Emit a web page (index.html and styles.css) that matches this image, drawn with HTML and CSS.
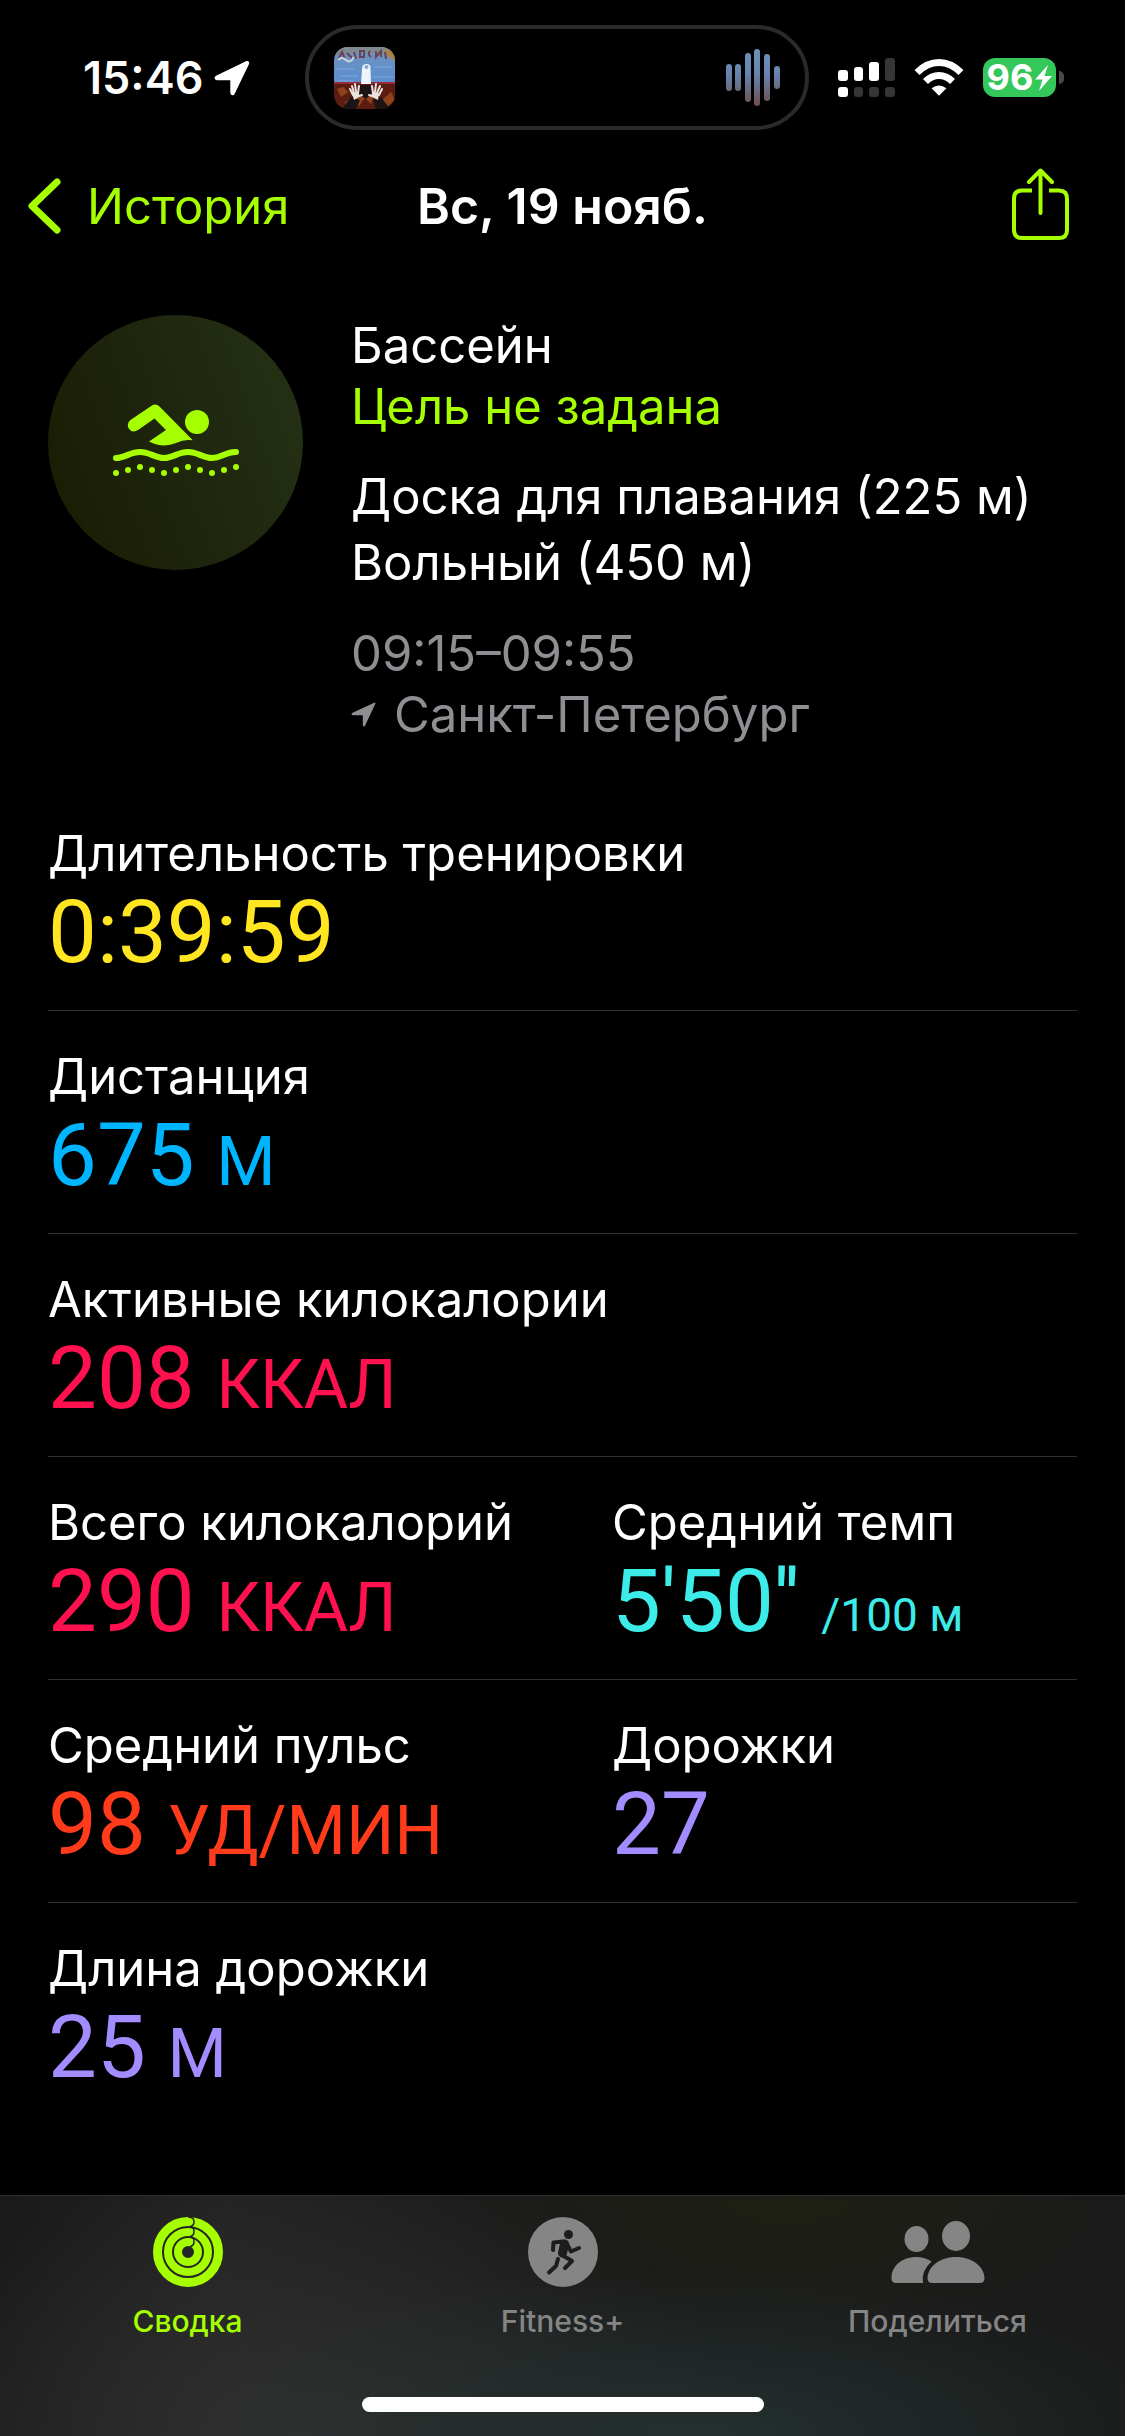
FILE: index.html
```html
<!DOCTYPE html>
<html lang="ru">
<head>
<meta charset="utf-8">
<meta name="viewport" content="width=device-width, initial-scale=1">
<title>Вс, 19 нояб.</title>
<link rel="stylesheet" href="styles.css">
</head>
<body>
<div class="status">
  <div class="status-left">
    <span class="time">15:46</span>
    <svg class="arrow" viewBox="0 0 36 36" fill="#fff"><path d="M2.500 15.500 31.500 1.400C34.200.200 36 2 34.800 4.500L20.700 33.800C19.400 36.300 16.300 35.600 16.300 32.600V20.200H3.300C.2 20.200-.5 16.900 2.500 15.500Z"/></svg>
  </div>
  <div class="island">
    <svg class="cover" viewBox="0 0 61 62">
      <defs>
        <clipPath id="cover"><rect width="61" height="62" rx="14"/></clipPath>
        <linearGradient id="sky" x2="0" y2="1"><stop offset="0" stop-color="#6f94bd"/><stop offset="1" stop-color="#5b8dcf"/></linearGradient>
      </defs>
      <g clip-path="url(#cover)">
        <rect width="61" height="38" fill="url(#sky)"/>
        <path d="M0 0H61V9L52 8 40 6 30 5 18 6 0 9Z" fill="#7d8a90"/>
        <path d="M4 13 8 5 11 12M13 6l5 5M20 5l2 7M26 4v6h4V4ZM36 4q-3 3 1 6M42 4v6l5-6v6M51 5l1 7" fill="none" stroke="#6d4155" stroke-width="2"/>
        <path d="M50 2 61 4V14L55 10Z" fill="#a9833f"/>
        <path d="M4 13q4-4 8 0t8-3" fill="none" stroke="#c9d3da" stroke-width="2"/>
        <path d="M2 22H20M6 29H24M40 20H58M38 30H60M3 34H20" stroke="#78a9e2"/>
        <rect y="36" width="61" height="26" fill="#5c1c12"/>
        <path d="M0 36H61" stroke="#952b38" stroke-width="2"/>
        <path d="M3 42l6-2 5 5-7 5ZM18 53l8-8 5 6-6 8ZM34 42l6 6-3 9-6-6ZM48 53l9-8 4 8-7 6ZM10 56l5-3 4 5Z" fill="#8e431c"/>
        <path d="M26 38H36L38 46 32 52 25 47ZM8 62 17 50 26 53 22 62ZM39 53 47 50 56 62H42Z" fill="#1b1414"/>
        <path d="M28 22q0-5 4.500-5t4 5L37 37H27Z" fill="#f0f3f7"/><circle cx="32.500" cy="20" r="2" fill="#7fa6d8"/>
        <g fill="none" stroke="#e9e4df" stroke-width="2" stroke-linecap="round"><path d="M19 48 16 42M20 46 18 39M22 45 21 37M24 46 25 39M25 49 28 48M45 48 48 42M43 46 46 39M41 45 42 37M39 46 38 39M38 49 35 48"/></g>
        <path d="M18 46 25 45 25 50 20 53ZM45 46 38 45 38 50 44 53Z" fill="#e9e4df"/>
      </g>
    </svg>
    <svg class="wave" viewBox="0 0 54 57">
      <defs><linearGradient id="wv" gradientUnits="userSpaceOnUse" x1="0" y1="0" x2="0" y2="57"><stop offset="0" stop-color="#6f92b8"/><stop offset=".45" stop-color="#6583ae"/><stop offset="1" stop-color="#714d4a"/></linearGradient></defs>
      <g fill="url(#wv)"><rect y="15" width="6" height="27" rx="3"/><rect x="9" y="15" width="6" height="27" rx="3"/><rect x="19" y="4" width="6" height="49" rx="3"/><rect x="28" y="0" width="6" height="57" rx="3"/><rect x="38" y="5" width="6" height="47" rx="3"/><rect x="48" y="17" width="6" height="23" rx="3"/></g>
    </svg>
  </div>
  <div class="status-right">
    <svg class="signal" viewBox="0 0 57 39"><g fill="#fff"><rect y="12" width="10" height="11" rx="3"/><rect x="16" y="9" width="9" height="14" rx="3"/><rect x="31" y="4" width="10" height="19" rx="3"/><rect y="29" width="10" height="10" rx="3"/></g><g fill="#363636"><rect x="47" width="10" height="23" rx="3"/><rect x="16" y="29" width="9" height="10" rx="3"/><rect x="31" y="29" width="10" height="10" rx="3"/><rect x="47" y="29" width="10" height="10" rx="3"/></g></svg>
    <svg class="wifi" viewBox="0 0 50 37"><g fill="none" stroke="#fff" stroke-width="7"><path d="M3 13.500Q13 3.500 25 3.500T47 13.500"/><path d="M11.500 22.500Q17.500 16.500 25 16.500T38.500 22.500"/></g><path d="M17.600 29.300Q25 23.500 32.400 29.300L25 36.800Z" fill="#fff"/></svg>
    <div class="battery">
      <span>96</span>
      <svg viewBox="0 0 17 26" fill="#fff"><path d="M13 0 0 14.500H7.500L4 26 17 11H9.500Z"/></svg>
      <i class="battery-tip"></i>
    </div>
  </div>
</div>

<header class="nav">
  <button class="back" type="button">
    <svg viewBox="0 0 33 56" fill="none" stroke="currentColor" stroke-width="7" stroke-linecap="round" stroke-linejoin="round"><path d="M29 4 4 28 29 52"/></svg>
    <span>История</span>
  </button>
  <h1>Вс, 19 нояб.</h1>
  <button class="share" type="button" aria-label="Поделиться тренировкой">
    <svg viewBox="0 0 57 72" fill="none" stroke="currentColor" stroke-width="4" stroke-linecap="round" stroke-linejoin="round"><path d="M28.500 45V3M17 14 28.500 2.500 40 14"/><path stroke-linecap="butt" d="M20 22.500H10Q2 22.500 2 30.500V62Q2 70 10 70H47Q55 70 55 62V30.500Q55 22.500 47 22.500H37"/></svg>
  </button>
</header>

<main>
  <section class="hero">
    <div class="badge">
      <svg viewBox="0 0 126 72" fill="currentColor"><path d="M17.800 15.800 39 1.500Q43-.8 46.500 2.500L79.800 36.300Q71 35 63 39Q50 44.500 36 37.500L53 26 41.500 14.500 25 26Q19 29.500 15.700 24.500 13.200 19 17.800 15.800Z"/><circle cx="84" cy="18" r="12"/><path fill="none" stroke="currentColor" stroke-width="6" stroke-linecap="round" d="M3 54C12 54 17 48 27 48S42 54 51 54 65 48 75 48 90 54 99 54 112 48 123 48"/><circle cx="3" cy="69" r="3"/><circle cx="15" cy="66" r="3"/><circle cx="27" cy="63" r="3"/><circle cx="39" cy="66" r="3"/><circle cx="51" cy="69" r="3"/><circle cx="63" cy="66" r="3"/><circle cx="75" cy="63" r="3"/><circle cx="87" cy="66" r="3"/><circle cx="99" cy="69" r="3"/><circle cx="111" cy="66" r="3"/><circle cx="123" cy="63" r="3"/></svg>
    </div>
    <div class="info">
      <div>
        <h2>Бассейн</h2>
        <p class="goal">Цель не задана</p>
      </div>
      <div class="strokes">
        <p>Доска для плавания (225 м)</p>
        <p>Вольный (450 м)</p>
      </div>
      <div class="meta">
        <p>09:15–09:55</p>
        <p class="place"><svg viewBox="0 0 36 36" fill="currentColor"><path d="M1.500 16 33.500 1Q36 0 35 2.500L20 34.500Q18 36.500 17 33.500V19H2.500Q-.5 18 1.500 16Z"/></svg>Санкт-Петербург</p>
      </div>
    </div>
  </section>

  <dl class="metrics">
    <div class="row"><div><dt>Длительность тренировки</dt><dd class="yellow">0:39:59</dd></div></div>
    <div class="row"><div><dt>Дистанция</dt><dd class="blue">675 <span class="unit">М</span></dd></div></div>
    <div class="row"><div><dt>Активные килокалории</dt><dd class="pink">208 <span class="unit">ККАЛ</span></dd></div></div>
    <div class="row">
      <div><dt>Всего килокалорий</dt><dd class="pink">290 <span class="unit">ККАЛ</span></dd></div>
      <div><dt>Средний темп</dt><dd class="cyan">5'50'' <span class="per">/100 м</span></dd></div>
    </div>
    <div class="row">
      <div><dt>Средний пульс</dt><dd class="red">98 <span class="unit">УД/МИН</span></dd></div>
      <div><dt>Дорожки</dt><dd class="violet">27</dd></div>
    </div>
    <div class="row"><div><dt>Длина дорожки</dt><dd class="violet">25 <span class="unit">М</span></dd></div></div>
  </dl>
</main>

<footer class="tabbar">
  <nav class="tabs">
    <a class="tab active" href="#summary" aria-current="page">
      <svg class="tab-icon" viewBox="0 0 70 70" fill="none"><g stroke="currentColor"><circle cx="35" cy="35" r="30.500" stroke-width="9"/><circle cx="35" cy="35" r="20" stroke-width="8"/><circle cx="35" cy="35" r="10" stroke-width="8"/></g><path d="M35 0Q41 0 41 4.500T37 9.500Q41 10 41 14.500T37 19.500Q41 20 41 24.500T37 29.500" stroke="#232323" stroke-width="1.500"/></svg>
      <span>Сводка</span>
    </a>
    <a class="tab" href="#fitness">
      <svg class="tab-icon" viewBox="0 0 70 70"><circle cx="35" cy="35" r="35" fill="currentColor"/><g fill="none" stroke="#1d1d1d" stroke-linecap="round" stroke-linejoin="round"><path d="M36.500 27 34.500 36" stroke-width="9"/><path d="M35 24.500 25.500 25.500 25 33M39 27 43 34.500 51 31M34 38 44 44 37 51" stroke-width="4"/><path d="M30 42 28 49 21 55.500" stroke-width="4"/></g><circle cx="40.500" cy="17.500" r="4.500" fill="#1d1d1d"/></svg>
      <span>Fitness+</span>
    </a>
    <a class="tab" href="#sharing">
      <svg class="tab-icon wide" viewBox="0 0 94 70" fill="currentColor"><ellipse cx="25.500" cy="22" rx="12" ry="13"/><ellipse cx="65" cy="19" rx="14" ry="15"/><path d="M5 66Q0 66 .5 60C1 49 11 40 25 40Q34 40 40.500 44.500Q30 54 32 66Z"/><path d="M41 66Q36.500 66 36.500 61C37 50 48 40 65 40S93 50 93.500 61Q93.500 66 89 66Z"/></svg>
      <span>Поделиться</span>
    </a>
  </nav>
  <div class="home"></div>
</footer>
</body>
</html>
```
FILE: styles.css
```css
* { box-sizing: border-box; margin: 0; padding: 0; }

:root { --lime: #a6ff00; --gray: #8e8e93; }

body {
  display: flex;
  flex-direction: column;
  min-height: 100vh;
  background: #000;
  color: #fff;
  font-family: Inter, "Noto Sans", sans-serif;
  font-size: 49px;
  line-height: 61px;
  white-space: nowrap;
}

svg { display: block; flex: none; }
h1, h2 { font-size: inherit; font-weight: 400; }
button { border: 0; background: none; font: inherit; color: var(--lime); }

/* Status bar */
.status {
  display: grid;
  grid-template-columns: 305fr 504fr 316fr;
  height: 155px;
  padding: 25px 0;
}
.status-left, .status-right { display: flex; align-items: center; }
.status-left { gap: 11px; padding-left: 83px; }
.time { font-size: 45px; font-weight: 600; }
.arrow { width: 36px; height: 36px; }
.island {
  display: flex;
  align-items: center;
  justify-content: space-between;
  padding: 0 25px;
  border: 4px solid #2a2a2a;
  border-radius: 53px;
}
.cover { width: 61px; height: 62px; }
.wave { width: 54px; height: 57px; }
.status-right { padding-left: 29px; gap: 19px; }
.signal { width: 57px; height: 39px; }
.wifi { width: 50px; height: 37px; }
.battery {
  position: relative;
  display: flex;
  align-items: center;
  justify-content: center;
  gap: 2px;
  width: 73px;
  height: 39px;
  border-radius: 12px;
  background: #34c759;
  font-size: 36px;
  font-weight: 700;
  line-height: 39px;
}
.battery svg { width: 17px; height: 26px; }
.battery-tip {
  position: absolute;
  left: 76px;
  top: 13px;
  width: 5px;
  height: 13px;
  border-radius: 0 5px 5px 0;
  background: #4a4a4a;
}

/* Navigation bar */
.nav {
  display: grid;
  grid-template-columns: 1fr auto 1fr;
  align-items: center;
  height: 102px;
  padding: 0 56px 0 28px;
}
.nav h1 { font-size: 50px; font-weight: 600; padding-left: 28px; }
.back { display: flex; align-items: center; gap: 26px; justify-self: start; }
.back svg { width: 33px; height: 56px; }
.share { justify-self: end; padding-bottom: 4px; }
.share svg { width: 57px; height: 72px; }

main { padding: 58px 48px 0; }

/* Workout summary */
.hero { display: flex; align-items: flex-start; gap: 48px; padding-bottom: 43px; }
.badge {
  display: flex;
  flex: none;
  align-items: center;
  justify-content: center;
  width: 255px;
  height: 255px;
  padding-bottom: 6px;
  border-radius: 50%;
  background: linear-gradient(70deg, #181b00, #1f260e 50%, #253216);
  color: var(--lime);
}
.badge svg { width: 126px; height: 72px; }
.info { display: flex; flex-direction: column; gap: 27px; }
.goal { color: var(--lime); }
.strokes { line-height: 66px; }
.meta { color: var(--gray); }
.place { display: flex; align-items: center; gap: 18px; }
.place svg { width: 25px; height: 25px; }

/* Metrics */
.row {
  display: grid;
  grid-template-columns: 564fr 465fr;
  padding: 36px 0 30px;
  border-bottom: 1px solid #303032;
}
.row > :only-child { grid-column: 1 / -1; }
.row:last-child { border-bottom: 0; }
dt { line-height: 60px; }
dd { font-family: Roboto, Inter, sans-serif; font-size: 87px; line-height: 96px; }
.unit { font-size: 68px; line-height: 1; }
.per { font-size: 46px; line-height: 1; }
.yellow { color: #ffe620; }
.blue { color: #00b5ff; }
.pink { color: #ff1150; }
.cyan { color: #3cece8; }
.red { color: #ff3b1c; }
.violet { color: #a38cff; }

/* Tab bar */
.tabbar {
  display: flex;
  flex-direction: column;
  justify-content: space-between;
  height: 241px;
  margin-top: auto;
  padding: 21px 0 24px;
  border-top: 1px solid #2c2c2c;
  background:
    radial-gradient(45% 70% at 62% 100%, #24302f, transparent),
    radial-gradient(40% 110% at 27% 100%, #303030, transparent),
    radial-gradient(30% 60% at 70% 0, #1e2014, transparent),
    linear-gradient(90deg, #1a1a1a, #232323 20%, #1a1a1a 50%, #1a1a1a);
}
.tabs { display: grid; grid-template-columns: repeat(3, 1fr); }
.tab {
  display: flex;
  flex-direction: column;
  align-items: center;
  gap: 14px;
  color: #858585;
  font-size: 30px;
  font-weight: 500;
  line-height: 40px;
  text-decoration: none;
}
.tab.active { color: var(--lime); }
.tab-icon { width: 70px; height: 70px; }
.tab-icon.wide { width: 94px; }
.home { align-self: center; width: 402px; height: 15px; border-radius: 8px; background: #fff; }
```
